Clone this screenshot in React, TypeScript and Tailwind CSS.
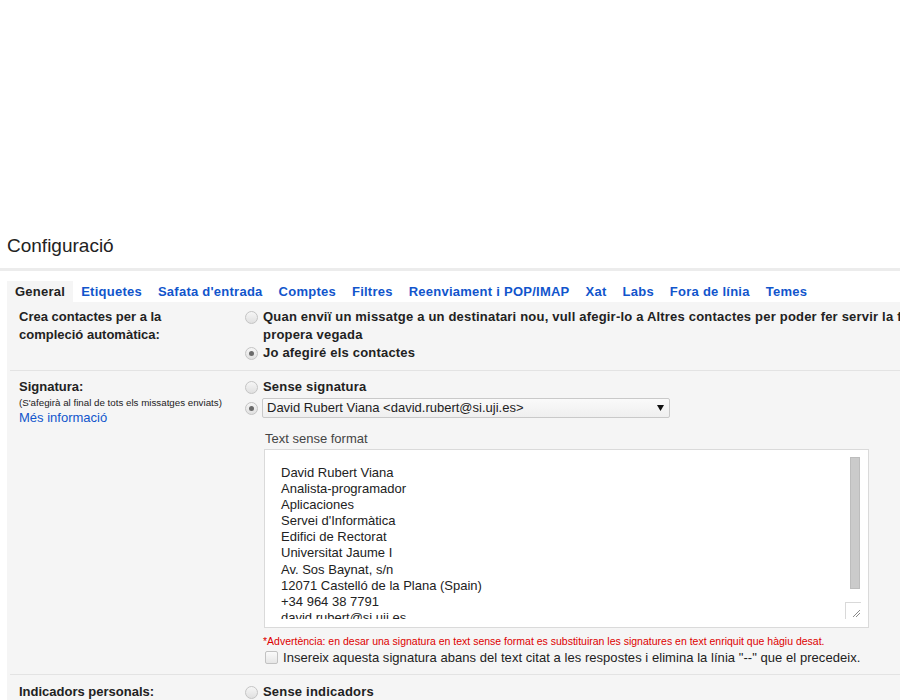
const tabs = [
  'Etiquetes',
  "Safata d'entrada",
  'Comptes',
  'Filtres',
  'Reenviament i POP/IMAP',
  'Xat',
  'Labs',
  'Fora de línia',
  'Temes',
]

const signature = [
  'David Rubert Viana',
  'Analista-programador',
  'Aplicaciones',
  "Servei d'Informàtica",
  'Edifici de Rectorat',
  'Universitat Jaume I',
  'Av. Sos Baynat, s/n',
  '12071 Castelló de la Plana (Spain)',
  '+34 964 38 7791',
  'david.rubert@si.uji.es',
  'http://www.uji.es',
]

function Radio({ checked = false }: { checked?: boolean }) {
  return (
    <span className="flex h-[13px] w-[13px] shrink-0 items-center justify-center rounded-full border border-[#c4c4c4] bg-gradient-to-b from-[#f6f6f6] to-[#e0e0e0]">
      {checked && <span className="h-[5px] w-[5px] rounded-full bg-[#6a6a6a]" />}
    </span>
  )
}

function Separator() {
  return <div className="ml-[3px] h-px bg-[#e3e3e3]" />
}

export default function App() {
  return (
    <div
      className="h-[700px] w-[900px] overflow-hidden bg-white text-[#222]"
      style={{ fontFamily: '"Liberation Sans", Arial, sans-serif' }}
    >
      <div className="h-[232px]" />
      <h1 className="pl-[7px] text-[19px] leading-[28px]">Configuració</h1>
      <div className="mt-[8px] h-[3px] bg-[#ececec]" />

      <div className="ml-[7px] mt-[10px] w-[1100px]">
        <div className="flex text-[13px] font-bold leading-[21px] tracking-[0.25px]">
          <div className="bg-[#f5f5f5] px-2 text-[#222]">General</div>
          {tabs.map((t) => (
            <div key={t} className="px-2 text-[#15c]">
              {t}
            </div>
          ))}
        </div>

        <div className="bg-[#f5f5f5] text-[13px]">
          {/* crea contactes */}
          <div className="flex pb-[8px] pt-[6px] leading-[18px]">
            <div className="w-[238px] shrink-0 pl-3 font-bold">
              Crea contactes per a la
              <br />
              compleció automàtica:
            </div>
            <div className="font-bold tracking-[0.2px]">
              <div className="flex items-start gap-[5px] whitespace-nowrap">
                <span className="mt-[3px]">
                  <Radio />
                </span>
                <span>
                  Quan enviï un missatge a un destinatari nou, vull afegir-lo a Altres contactes per poder fer servir la funció de compleció automàtica la
                  <br />
                  propera vegada
                </span>
              </div>
              <div className="flex items-center gap-[5px]">
                <Radio checked />
                <span>Jo afegiré els contactes</span>
              </div>
            </div>
          </div>
          <Separator />

          {/* signatura */}
          <div className="flex pb-[8px] pt-[7px]">
            <div className="w-[238px] shrink-0 pl-3">
              <div className="font-bold leading-[18px]">Signatura:</div>
              <div className="text-[9.75px] leading-[14px]">(S'afegirà al final de tots els missatges enviats)</div>
              <div className="leading-[16px] text-[#15c]">Més informació</div>
            </div>
            <div>
              <div className="flex items-center gap-[5px] font-bold leading-[18px] tracking-[0.2px]">
                <Radio />
                <span>Sense signatura</span>
              </div>
              <div className="mt-[2px] flex items-center gap-[4px]">
                <Radio checked />
                <div className="flex h-[20px] w-[408px] items-center justify-between rounded-[2px] border border-[#c9c9c9] bg-gradient-to-b from-[#fafafa] to-[#efefef] pl-[4px] pr-[5px] text-[13px]">
                  <span>David Rubert Viana &lt;david.rubert@si.uji.es&gt;</span>
                  <svg width="7" height="6" viewBox="0 0 7 6">
                    <path d="M0 0h7L3.5 6z" fill="#111" />
                  </svg>
                </div>
              </div>

              <div className="pl-[19px]">
                <div className="mt-[13px] pl-px leading-[16px] text-[#444]">Text sense format</div>
                <div className="relative mt-[2px] h-[179px] w-[605px] border border-[#dadada] bg-white">
                  <div className="h-[169px] overflow-hidden pl-[16px] pt-[15px] text-[13px] leading-[16.1px] text-[#222]">
                    {signature.map((l) => (
                      <div key={l}>{l}</div>
                    ))}
                  </div>
                  <div className="absolute right-[8px] top-[7px] h-[132px] w-[10px] border border-[#bdbdbd] bg-[#cbcbcb]" />
                  <div className="absolute bottom-[8px] right-[7px] flex h-[17px] w-[16px] items-end justify-end border-l border-t border-[#d9d9d9]">
                    <svg width="8" height="8" viewBox="0 0 8 8" className="mb-[2px] mr-[1px]">
                      <path d="M1 8L8 1M4 8L8 4" stroke="#8a8a8a" strokeWidth="1" />
                    </svg>
                  </div>
                </div>
                <div className="mt-[6px] -ml-px text-[10.5px] leading-[14px] text-[#dd0000]">
                  *Advertència: en desar una signatura en text sense format es substituiran les signatures en text enriquit que hàgiu desat.
                </div>
                <div className="mt-[1px] flex items-center gap-[5px] pl-px leading-[17px] tracking-[0.05px]">
                  <span className="h-[13px] w-[13px] shrink-0 rounded-[2px] border border-[#c2c2c2] bg-gradient-to-b from-[#fafafa] to-[#e6e6e6]" />
                  <span>Insereix aquesta signatura abans del text citat a les respostes i elimina la línia "--" que el precedeix.</span>
                </div>
              </div>
            </div>
          </div>
          <Separator />

          {/* indicadors */}
          <div className="flex pb-[8px] pt-[8px] leading-[18px]">
            <div className="w-[238px] shrink-0 pl-3 font-bold">Indicadors personals:</div>
            <div className="flex items-center gap-[5px] font-bold tracking-[0.2px]">
              <Radio />
              <span>Sense indicadors</span>
            </div>
          </div>
        </div>
      </div>
    </div>
  )
}
